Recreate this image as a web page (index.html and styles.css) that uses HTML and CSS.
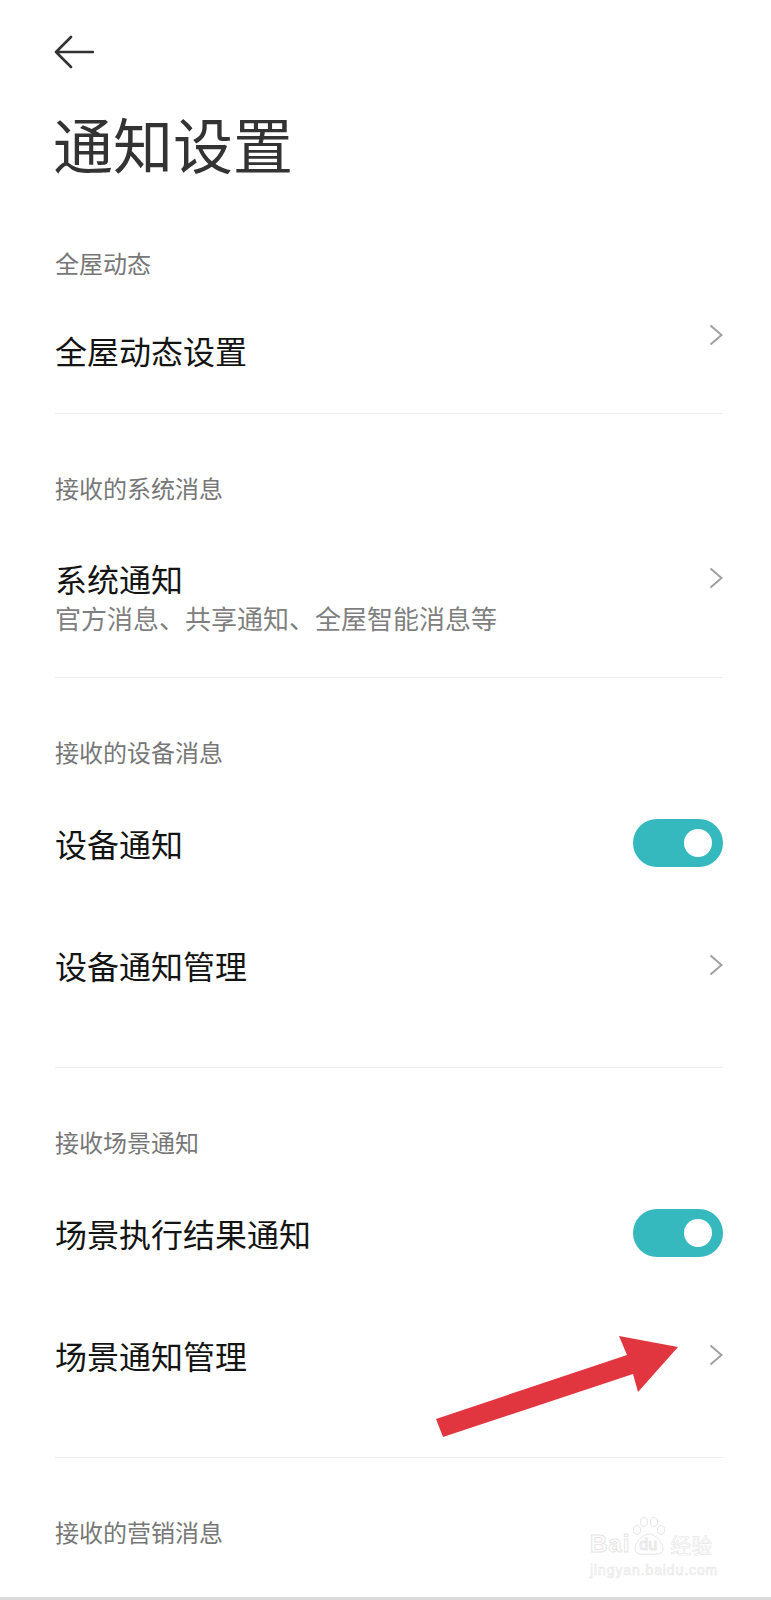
FILE: index.html
```html
<!doctype html>
<html>
  <head>
    <title>通知设置</title>
    <link rel="stylesheet" href="styles.css">
  </head>
  <body>
    <div id="page">
      <div id="header">
        <svg class="back" width="40" height="40" viewBox="0 0 40 40">
          <path d="M2 20 H39 M17 5 L2 20 L17 35" fill="none" stroke="#333" stroke-width="2.6" stroke-linecap="round" stroke-linejoin="round"/>
        </svg>
        <h1>通知设置</h1>
      </div>

      <div class="section">
        <div class="label">全屋动态</div>
        <div class="row short">
          <div class="name">全屋动态设置</div>
          <svg class="chevron high" width="14" height="22" viewBox="0 0 14 22"><polyline points="1.5,1.5 12.5,11 1.5,20.5"/></svg>
        </div>
      </div>

      <div class="section">
        <div class="label">接收的系统消息</div>
        <div class="row tall">
          <div>
            <div class="name">系统通知</div>
            <div class="sub">官方消息、共享通知、全屋智能消息等</div>
          </div>
          <svg class="chevron top" width="14" height="22" viewBox="0 0 14 22"><polyline points="1.5,1.5 12.5,11 1.5,20.5"/></svg>
        </div>
      </div>

      <div class="section multi">
        <div class="label">接收的设备消息</div>
        <div class="row">
          <div class="name">设备通知</div>
          <div class="toggle on"><span class="knob"></span></div>
        </div>
        <div class="row">
          <div class="name">设备通知管理</div>
          <svg class="chevron" width="14" height="22" viewBox="0 0 14 22"><polyline points="1.5,1.5 12.5,11 1.5,20.5"/></svg>
        </div>
      </div>

      <div class="section multi">
        <div class="label">接收场景通知</div>
        <div class="row">
          <div class="name">场景执行结果通知</div>
          <div class="toggle on"><span class="knob"></span></div>
        </div>
        <div class="row">
          <div class="name">场景通知管理</div>
          <svg class="chevron" width="14" height="22" viewBox="0 0 14 22"><polyline points="1.5,1.5 12.5,11 1.5,20.5"/></svg>
        </div>
      </div>

      <div class="section last">
        <div class="label">接收的营销消息</div>
      </div>

      <!-- red pointer drawn over the screenshot -->
      <svg id="pointer" width="260" height="115" viewBox="0 0 260 115">
        <polygon points="6,89 197,25 189,6 248,17 208,62 203,44 13,107" fill="#e1353f"/>
      </svg>

      <!-- watermark -->
      <div id="watermark">
        <div class="wm-logo">
          <span class="wm-bai">Bai</span>
          <span class="wm-paw">
            <svg width="34" height="40" viewBox="0 0 34 40">
              <g fill="none" stroke="#e6e6e6" stroke-width="1">
                <ellipse cx="5" cy="14" rx="3.5" ry="4.5"/>
                <ellipse cx="12" cy="6" rx="3.5" ry="4.5"/>
                <ellipse cx="22" cy="6" rx="3.5" ry="4.5"/>
                <ellipse cx="29" cy="14" rx="3.5" ry="4.5"/>
                <path d="M17 18 C10 18 3 27 3 33 C3 38 8 39 17 38 C26 39 31 38 31 33 C31 27 24 18 17 18 Z"/>
              </g>
            </svg>
            <span class="wm-du">du</span>
          </span>
          <span class="wm-cn">经验</span>
        </div>
        <div class="wm-url">jingyan.baidu.com</div>
      </div>
    </div>
  </body>
</html>
```

FILE: styles.css
```css
body {
  margin: 0;
  background-color: #fff;
  font-family: "Noto Sans CJK SC", "Noto Sans", sans-serif;
}

#page {
  position: relative;
  width: 771px;
  height: 1600px;
  box-sizing: border-box;
  border-bottom: 3px solid #dadada;
  overflow: hidden;
}

#header {
  padding: 32px 0 6px 54px;
}
.back {
  display: block;
}
#header h1 {
  margin: 31px 0 0 -1px;
  font-size: 60px;
  line-height: 80px;
  font-weight: 400;
  color: #333;
}

.section {
  margin: 0 48px 0 55px;
  border-bottom: 1px solid #eeeeee;
}
.section.multi {
  padding-bottom: 41px;
}
.section.last {
  border-bottom: none;
}

.label {
  padding: 59px 0 15px;
  font-size: 24px;
  line-height: 30px;
  color: #777;
}

.row {
  height: 122px;
  display: flex;
  align-items: center;
  justify-content: space-between;
}
.row.short {
  height: 120px;
  box-sizing: border-box;
  padding-bottom: 6px;
}
.row.tall {
  height: 159px;
  box-sizing: border-box;
  padding: 40px 0 39px;
  align-items: flex-start;
}

.name {
  font-size: 32px;
  line-height: 40px;
  color: #141414;
}
.sub {
  font-size: 26px;
  line-height: 40px;
  color: #7f7f7f;
}

.chevron {
  display: block;
  fill: none;
  stroke: #a0a0a0;
  stroke-width: 2;
}
.chevron.high {
  margin-bottom: 31px;
}
.chevron.top {
  margin-top: 9px;
}

.toggle {
  width: 90px;
  height: 48px;
  box-sizing: border-box;
  border-radius: 24px;
  background-color: #ccc;
  display: flex;
  align-items: center;
  justify-content: flex-end;
  padding-right: 11px;
}
.toggle.on {
  background-color: #35b9bf;
}
.knob {
  width: 28px;
  height: 28px;
  border-radius: 50%;
  background-color: #fff;
}

#pointer {
  position: absolute;
  left: 430px;
  top: 1330px;
}

#watermark {
  position: absolute;
  left: 590px;
  top: 1516px;
  color: #fff;
  -webkit-text-stroke: 1px #e6e6e6;
}
.wm-logo {
  display: flex;
  align-items: flex-end;
}
.wm-bai {
  font-family: "Liberation Sans", sans-serif;
  font-weight: bold;
  font-size: 24px;
  line-height: 24px;
  letter-spacing: 1px;
}
.wm-paw {
  position: relative;
  width: 34px;
  height: 40px;
  margin: 0 4px 0 2px;
}
.wm-paw svg {
  display: block;
}
.wm-du {
  position: absolute;
  left: 7px;
  bottom: 3px;
  font-family: "Liberation Sans", sans-serif;
  font-size: 16px;
  line-height: 16px;
}
.wm-cn {
  font-size: 21px;
  line-height: 24px;
  -webkit-text-stroke: 0.6px #e6e6e6;
}
.wm-url {
  margin-top: 6px;
  font-family: "Liberation Sans", sans-serif;
  font-size: 14px;
  line-height: 16px;
  letter-spacing: 0.9px;
  -webkit-text-stroke: 0.6px #e6e6e6;
}
```
